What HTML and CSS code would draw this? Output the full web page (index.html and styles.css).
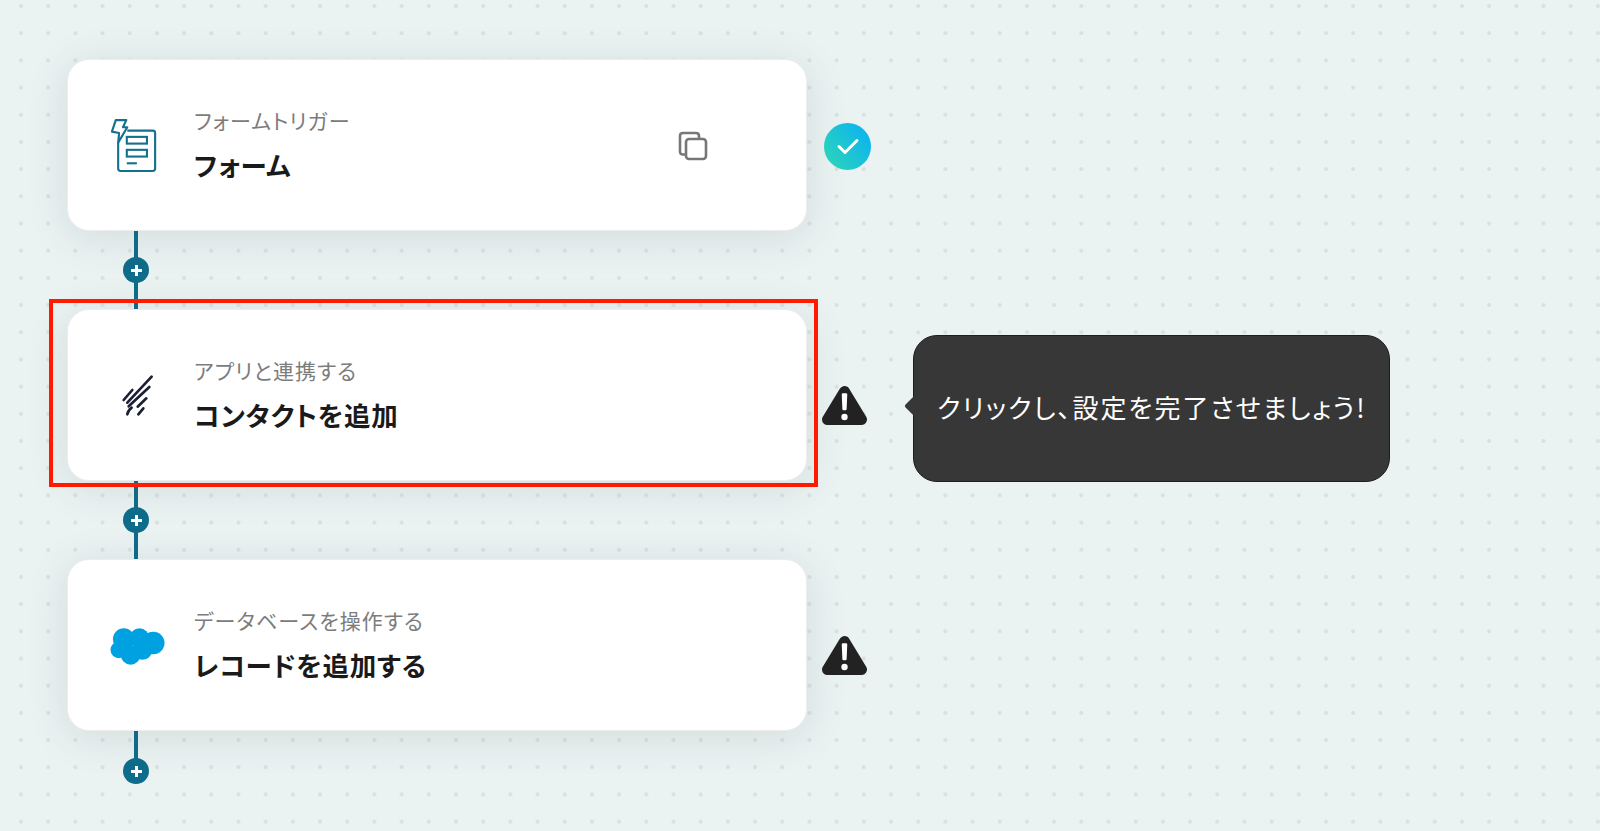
FILE: index.html
```html
<!DOCTYPE html>
<html lang="ja">
<head>
<meta charset="utf-8">
<title>フロー</title>
<link rel="stylesheet" href="styles.css">
</head>
<body>
<main class="flow">
  <section class="step">
    <div class="card">
      <div class="app-icon">
        <svg class="icon-form" width="48" height="54" viewBox="0 0 50 56" fill="none" stroke="#14708f" stroke-width="2.200">
          <path d="M18 12H44.500Q47 12 47 14.500V51.500Q47 54 44.500 54H11Q8.500 54 8.500 51.500V24"/>
          <path d="M6 1H17L13.500 8.500H18L8.500 24.500L9.500 14.500L2 13Z" stroke-linejoin="round"/>
          <rect x="17.500" y="18.500" width="21" height="7"/>
          <rect x="17.500" y="32" width="21" height="7"/>
          <path d="M17.500 46H28"/>
        </svg>
      </div>
      <div class="card-text">
        <p class="card-label">フォームトリガー</p>
        <p class="card-title">フォーム</p>
      </div>
      <svg class="copy-icon" width="30" height="30" viewBox="0 0 30 30" fill="none" stroke="#777" stroke-width="2.600">
        <path d="M7 23.500H5Q2 23.500 2 20.500V5Q2 2 5 2H18Q21 2 21 5V7"/>
        <rect x="8" y="8" width="20" height="20" rx="3"/>
      </svg>
    </div>
    <svg class="status check" width="47" height="47" viewBox="0 0 47 47">
      <defs>
        <linearGradient id="check-fill" x1="0" y1="1" x2="1" y2="0.300">
          <stop offset="0" stop-color="#2fd8b4"/>
          <stop offset="1" stop-color="#0db4ee"/>
        </linearGradient>
      </defs>
      <circle cx="23.500" cy="23.500" r="23.500" fill="url(#check-fill)"/>
      <path d="M15 23.500L21 29.500L33 17.500" fill="none" stroke="#fff" stroke-width="3" stroke-linecap="round" stroke-linejoin="round"/>
    </svg>
  </section>

  <div class="connector"><span class="plus"></span></div>

  <section class="step">
    <div class="card">
      <div class="app-icon">
        <svg class="icon-stripes" width="38" height="48" viewBox="90 60 114 144" fill="none" stroke="#1c1f33" stroke-width="8" stroke-linecap="round">
          <path d="M185 77L112 155"/>
          <path d="M178 108L116 166"/>
          <path d="M127 117L101 147"/>
          <path d="M169 142L143 167"/>
          <path d="M160 172L145 190"/>
          <path d="M125 170Q114 178 112 190"/>
        </svg>
      </div>
      <div class="card-text">
        <p class="card-label">アプリと連携する</p>
        <p class="card-title">コンタクトを追加</p>
      </div>
    </div>
    <svg class="status warn" width="45" height="41" viewBox="0 0 45 41">
      <path d="M22.500 6.500L39.500 34.500H5.500Z" fill="#222" stroke="#222" stroke-width="11" stroke-linejoin="round"/>
      <path d="M21 9.500H24L23.400 24H21.600Z" fill="#fff" stroke="#fff" stroke-width="2.500" stroke-linejoin="round"/>
      <circle cx="22.500" cy="32" r="3.200" fill="#fff"/>
    </svg>
    <div class="highlight"></div>
    <div class="tooltip">クリックし、設定を完了させましょう!</div>
  </section>

  <div class="connector"><span class="plus"></span></div>

  <section class="step">
    <div class="card">
      <div class="app-icon">
        <svg class="icon-cloud" width="55" height="40" viewBox="0 0 56 40" fill="#00a1e0">
          <circle cx="14" cy="12" r="11"/>
          <circle cx="30" cy="11" r="10"/>
          <circle cx="44" cy="16" r="11.500"/>
          <circle cx="9" cy="23" r="8.500"/>
          <circle cx="21" cy="28" r="10"/>
          <circle cx="33" cy="23" r="10"/>
        </svg>
      </div>
      <div class="card-text">
        <p class="card-label">データベースを操作する</p>
        <p class="card-title">レコードを追加する</p>
      </div>
    </div>
    <svg class="status warn" width="45" height="41" viewBox="0 0 45 41">
      <path d="M22.500 6.500L39.500 34.500H5.500Z" fill="#222" stroke="#222" stroke-width="11" stroke-linejoin="round"/>
      <path d="M21 9.500H24L23.400 24H21.600Z" fill="#fff" stroke="#fff" stroke-width="2.500" stroke-linejoin="round"/>
      <circle cx="22.500" cy="32" r="3.200" fill="#fff"/>
    </svg>
  </section>

  <div class="connector connector-end"><span class="plus"></span></div>
</main>
</body>
</html>
```

FILE: styles.css
```css
* {
  box-sizing: border-box;
}

html,
body {
  height: 100%;
}

body {
  margin: 0;
  overflow: hidden;
  font-family: "Noto Sans CJK JP", "Noto Sans", sans-serif;
  font-feature-settings: "palt";
  background-color: #eaf2f2;
  background-image: radial-gradient(circle, #d9e0e0 0, #d9e0e0 1.6px, transparent 2.3px);
  background-size: 27.2px 27.2px;
  background-position: 7.4px -7.6px;
}

.flow {
  padding: 59px 0 0 67px;
}

.step {
  position: relative;
  display: flex;
  align-items: center;
}

.card {
  display: flex;
  align-items: center;
  width: 740px;
  height: 172px;
  padding-left: 31px;
  background: #fff;
  border: 1px solid #eceeee;
  border-radius: 22px;
  box-shadow: 0 6px 40px rgba(60, 80, 80, 0.13);
}

.app-icon {
  display: flex;
  justify-content: center;
  align-items: center;
  flex: none;
  width: 76px;
  margin-right: 19px;
}

.icon-form {
  margin: 2px 6px 0 0;
}

.icon-stripes {
  margin-left: 4px;
}

.icon-cloud {
  margin: 3px 0 0 0;
}

.card-text {
  display: flex;
  flex-direction: column;
  gap: 13px;
  margin-top: -1px;
}

.card-label,
.card-title {
  margin: 0;
  white-space: nowrap;
}

.card-label {
  font-size: 21px;
  line-height: 28px;
  letter-spacing: 1.100px;
  color: #7c7c7c;
}

.card-title {
  font-size: 26.500px;
  line-height: 36px;
  letter-spacing: 0.700px;
  font-weight: 700;
  color: #1a1a1a;
}

.copy-icon {
  flex: none;
  margin: 2px 98px 0 auto;
}

.status {
  flex: none;
}

.check {
  margin: 2px 0 0 17px;
}

.warn {
  margin: 20px 0 0 15px;
}

.connector {
  display: flex;
  align-items: center;
  width: 26px;
  height: 78px;
  margin-left: 56px;
  background: linear-gradient(#0f6c8a, #0f6c8a) center top / 4px 100% no-repeat;
}

.connector-end {
  align-items: flex-end;
  height: 53px;
  background-size: 4px 32px;
}

.plus {
  display: block;
  width: 26px;
  height: 26px;
  border-radius: 50%;
  background:
    linear-gradient(#fff, #fff) center / 11px 3px no-repeat,
    linear-gradient(#fff, #fff) center / 3px 11px no-repeat,
    #0f6c8a;
}

.highlight {
  position: absolute;
  top: -10px;
  left: -18px;
  width: 769px;
  height: 188px;
  border: 4px solid #ff1a00;
  pointer-events: none;
}

.tooltip {
  position: absolute;
  top: 26px;
  left: 846px;
  display: flex;
  align-items: center;
  width: 477px;
  height: 147px;
  padding: 0 0 4px 23px;
  font-size: 26px;
  letter-spacing: 2px;
  color: #fff;
  white-space: nowrap;
  background: #373737;
  border: 1px solid #1e1e1e;
  border-radius: 24px;
}

.tooltip::before {
  content: "";
  position: absolute;
  top: 63px;
  left: -7px;
  width: 14px;
  height: 14px;
  background: #373737;
  transform: rotate(45deg);
  border-radius: 2px;
}
```
